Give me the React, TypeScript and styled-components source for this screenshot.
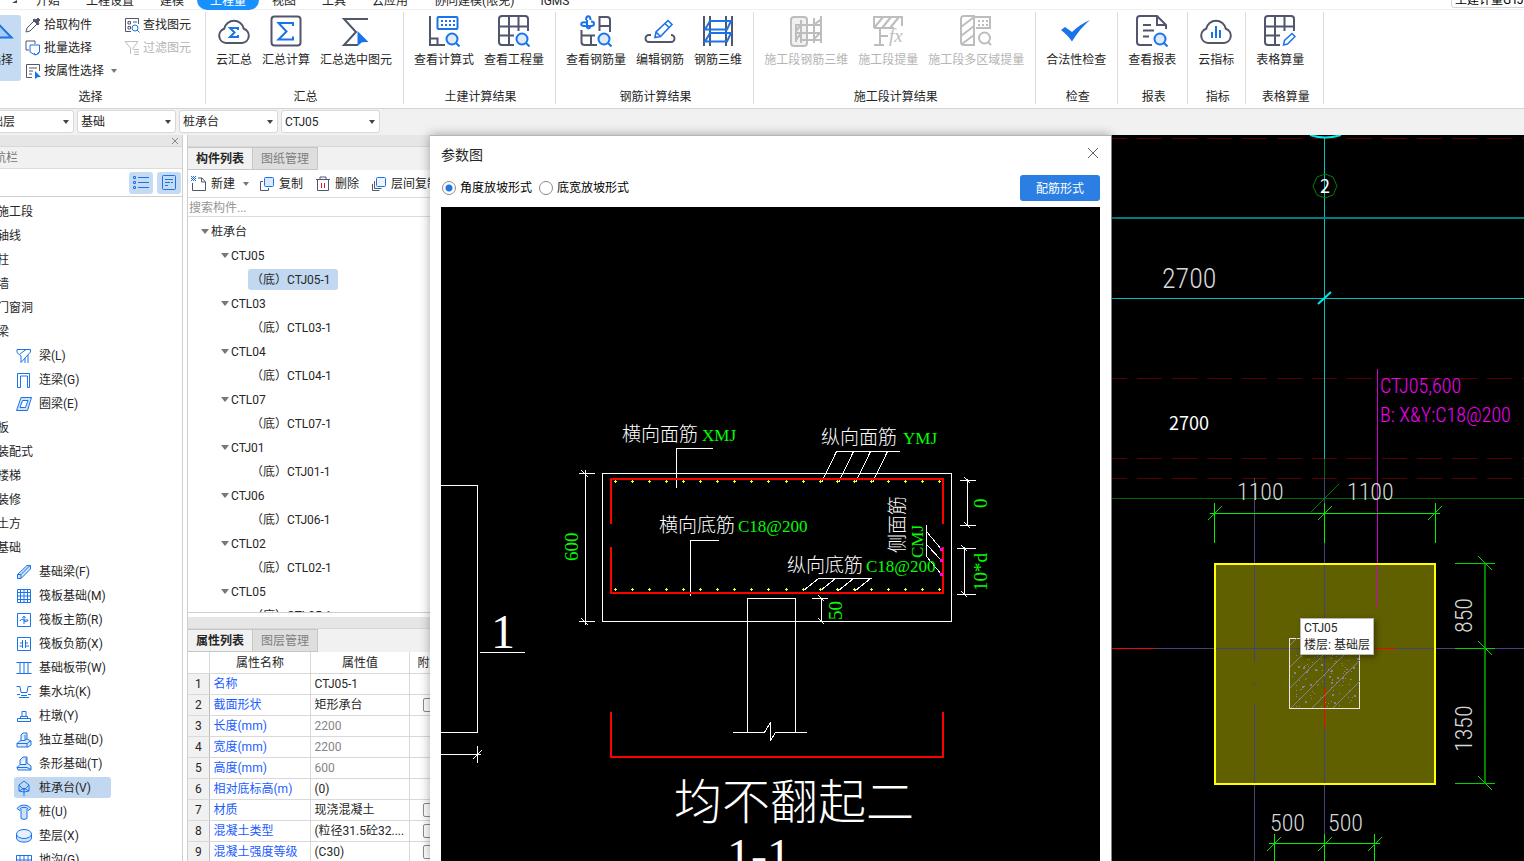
import React, { useState } from "react";
import styled, { createGlobalStyle } from "styled-components";

const INK = "#50566b";
const BLUE = "#1a73e8";
const GREY = "#bdbdbd";
const UI = 'Roboto, "Noto Sans CJK SC", sans-serif';

const GlobalStyle = createGlobalStyle`
  * { box-sizing: border-box; }
  html, body { margin: 0; overflow: hidden; background: #fff; }
  body, button, input, select, table { font-family: ${UI}; font-size: 12px; color: #262626; }
  button { background: none; border: 0; padding: 0; text-align: left; line-height: 16px; }
`;

/* ---------- shell ---------- */
const Shell = styled.div`
  display: flex;
  flex-direction: column;
  height: 100vh;
  margin-left: -26px;
  overflow: hidden;
  line-height: 16px;
`;

const TabBar = styled.nav`
  display: flex;
  align-items: flex-end;
  flex: none;
  height: 10px;
  padding-left: 38px;
  overflow: hidden;
  box-shadow: inset 0 -1px #f0f0f0;
`;
const Corner = styled.svg`
  flex: none;
  width: 6px;
  height: 10px;
  margin-right: 5px;
`;
const MenuTab = styled.button<{ $active?: boolean }>`
  flex: none;
  height: 20px;
  padding: 0 13px;
  border-radius: 10px;
  white-space: nowrap;
  line-height: 22px;
  background: ${(p) => (p.$active ? "#1890ff" : "transparent")};
  color: ${(p) => (p.$active ? "#fff" : "#262626")};
`;
const ProductBox = styled.input`
  width: 90px;
  height: 20px;
  margin: 0 -17px 2px auto;
  padding: 0 3px;
  border: 1px solid #d6d6d6;
  border-radius: 3px;
  color: #000;
`;

/* ---------- ribbon ---------- */
const Ribbon = styled.header`
  display: flex;
  flex: none;
  height: 99px;
  padding-top: 2px;
  border-bottom: 1px solid #d4d4d4;
  background: #fff;
`;
const Group = styled.section<{ $min?: number }>`
  display: flex;
  flex-direction: column;
  flex: none;
  justify-content: space-between;
  height: 92px;
  min-width: ${(p) => p.$min ?? 0}px;
  border-right: 1px solid #dcdcdc;
`;
const GroupButtons = styled.div`
  display: flex;
  gap: 10px;
  padding: 3px 11px 0 10px;
`;
const GroupLabel = styled.div`
  height: 15px;
  padding-left: 2px;
  text-align: center;
`;
const BigButton = styled.button<{ $off?: boolean }>`
  display: flex;
  flex-direction: column;
  flex: none;
  align-items: center;
  gap: 5px;
  white-space: nowrap;
  color: ${(p) => (p.$off ? "#b5b5b5" : "#262626")};
`;
const SelectGroup = styled(Group)`
  width: 232px;
`;
const SelectRow = styled.div`
  display: flex;
  padding-top: 3px;
`;
const PickButton = styled(BigButton)`
  width: 47px;
  height: 66px;
  padding-left: 7px;
  border-radius: 0 3px 3px 0;
  background: #c5dbf3;
`;
const SmallColumn = styled.div`
  display: flex;
  flex-direction: column;
  flex: none;
  width: 99px;
  padding-left: 4px;
`;
const SmallButton = styled.button<{ $off?: boolean }>`
  display: flex;
  align-items: center;
  gap: 3px;
  height: 23px;
  padding-bottom: 4px;
  white-space: nowrap;
  color: ${(p) => (p.$off ? "#b5b5b5" : "#262626")};
`;
const Caret = styled.span`
  width: 0;
  height: 0;
  margin: 0 -2px 0 4px;
  border: 3px solid transparent;
  border-top: 4px solid #777;
  border-bottom: 0;
`;

/* ---------- selector bar ---------- */
const SelectorBar = styled.div`
  display: flex;
  flex: none;
  gap: 3px;
  height: 26px;
  padding: 1px;
  background: #f1f1f1;
`;
const Picker = styled.label`
  position: relative;
  width: 99px;
  height: 23px;
`;
const PickerSelect = styled.select`
  appearance: none;
  width: 100%;
  height: 100%;
  padding: 0 3px;
  border: 1px solid #d8d8d8;
  border-radius: 3px;
  background: #fff;
`;
const PickerCaret = styled(Caret)`
  position: absolute;
  right: 7px;
  top: 10px;
  border-top-color: #444;
`;

/* ---------- work area ---------- */
const WorkArea = styled.main`
  display: flex;
  flex: 1;
  min-height: 0;
  background: #fff;
`;
const NavPanel = styled.aside`
  display: flex;
  flex-direction: column;
  flex: none;
  width: 209px;
  margin-right: 4px;
  border-right: 1px solid #cfcfcf;
  overflow: hidden;
`;
const Strip = styled.div`
  display: flex;
  flex: none;
  justify-content: flex-end;
  align-items: center;
  height: 12px;
  padding-right: 3px;
  background: #e6e6e6;
  border-bottom: 1px solid #d8d8d8;
`;
const NavTitle = styled.div`
  flex: none;
  height: 22px;
  padding: 3px 8px;
  background: #f1f1f1;
  border-bottom: 1px solid #dcdcdc;
  color: #777;
`;
const NavTools = styled.div`
  display: flex;
  flex: none;
  justify-content: flex-end;
  gap: 4px;
  height: 28px;
  padding: 3px 1px 0 0;
  border-bottom: 1px solid #cfcfcf;
`;
const ToggleButton = styled.button`
  display: flex;
  align-items: center;
  justify-content: center;
  width: 24px;
  height: 22px;
  border-radius: 3px;
  background: #c5dbf3;
`;
const NavList = styled.ul`
  flex: 1;
  min-height: 0;
  margin: 0;
  padding: 3px 0 0;
  list-style: none;
  overflow: hidden;
`;
const NavRow = styled.li`
  height: 24px;
  padding: 1px 0 0 23px;
`;
const NavHeading = styled.button`
  display: block;
  height: 22px;
  white-space: nowrap;
`;
const NavItem = styled.button<{ $active?: boolean }>`
  display: flex;
  align-items: center;
  gap: 7px;
  height: 21px;
  margin-left: 17px;
  padding: 0 3px 0 2px;
  min-width: ${(p) => (p.$active ? 97 : 0)}px;
  border-radius: 3px;
  white-space: nowrap;
  background: ${(p) => (p.$active ? "#c2d8f1" : "transparent")};
`;

const ListPanel = styled.aside`
  display: flex;
  flex-direction: column;
  flex: none;
  width: 243px;
  border-left: 1px solid #cfcfcf;
  overflow: hidden;
`;
const PanelTabs = styled.div`
  display: flex;
  flex: none;
  height: 23px;
  background: #f1f1f1;
`;
const PanelTab = styled.button<{ $active?: boolean }>`
  width: 65px;
  border: 1px solid #c6c6c6;
  border-width: 1px 1px 1px 0;
  text-align: center;
  font-weight: ${(p) => (p.$active ? 700 : 400)};
  color: ${(p) => (p.$active ? "#262626" : "#808080")};
  background: ${(p) => (p.$active ? "#f1f1f1" : "#dedede")};
`;
const Toolbar = styled.div`
  display: flex;
  flex: none;
  gap: 12px;
  height: 28px;
  padding: 1px 0 0 3px;
  border-bottom: 1px solid #dcdcdc;
`;
const ToolButton = styled.button`
  display: flex;
  align-items: center;
  gap: 4px;
  flex: none;
  white-space: nowrap;
`;
const SearchInput = styled.input`
  flex: none;
  width: 100%;
  height: 19px;
  padding: 1px 1px 0;
  border: 0;
  border-bottom: 1px solid #dcdcdc;
  outline: 0;
  &::placeholder { color: #969696; }
`;
const Tree = styled.ul`
  flex: 1;
  min-height: 0;
  margin: 0 0 4px;
  padding: 3px 0 0;
  list-style: none;
  overflow: hidden;
  border-bottom: 1px solid #cfcfcf;
`;
const TreeRow = styled.li<{ $depth: number }>`
  display: flex;
  align-items: center;
  height: 24px;
  padding-bottom: 1px;
  padding-left: ${(p) => [9, 29, 60][p.$depth]}px;
`;
const TreeButton = styled.button<{ $active?: boolean }>`
  height: 21px;
  padding: 0 7px 0 3px;
  border-radius: 3px;
  white-space: nowrap;
  background: ${(p) => (p.$active ? "#c2d8f1" : "transparent")};
`;
const TreeCaret = styled(Caret)`
  border-width: 4px;
  border-top-width: 5px;
  border-bottom-width: 0;
  margin-right: -1px;
`;
const Properties = styled.section`
  flex: none;
  height: 244px;
  overflow: hidden;
`;
const PropTable = styled.table`
  table-layout: fixed;
  width: 261px;
  border-collapse: collapse;
  th, td {
    height: 21px;
    padding: 0 3px 0 4px;
    border: 1px solid #d9d9d9;
    border-width: 0 1px 1px 0;
    white-space: nowrap;
    overflow: hidden;
    font-weight: 400;
    line-height: 16px;
    text-align: left;
  }
  thead th, th[scope="row"] { text-align: center; }
  thead th { padding-top: 1px; }
  th[scope="row"] { background: #f1f1f1; padding: 0; border-right-color: #bdbdbd; }
`;
const NameCell = styled.td`
  color: #1a5cff;
`;
const ValueCell = styled.td<{ $dim?: boolean }>`
  color: ${(p) => (p.$dim ? "#858585" : "#262626")};
`;
const TickBox = styled.input`
  appearance: none;
  display: block;
  width: 14px;
  height: 14px;
  margin: 0 auto;
  border: 1px solid #8c8c8c;
  border-radius: 2px;
  background: #fff;
`;

/* ---------- dialog ---------- */
const Dialog = styled.section`
  display: flex;
  flex-direction: column;
  flex: none;
  width: 681px;
  padding: 0 11px;
  border-top: 1px solid #b4b4b4;
  background: #fff;
  box-shadow: 0 0 10px rgba(0, 0, 0, 0.35);
  z-index: 1;
`;
const DialogHead = styled.div`
  display: flex;
  align-items: center;
  justify-content: space-between;
  height: 38px;
`;
const DialogTitle = styled.h2`
  margin: 0;
  font-size: 14px;
  font-weight: 400;
`;
const DialogOptions = styled.div`
  display: flex;
  align-items: flex-start;
  gap: 6px;
  height: 33px;
  padding-top: 1px;
`;
const RadioLabel = styled.label`
  display: flex;
  align-items: center;
  gap: 4px;
  height: 25px;
  color: #000;
`;
const Radio = styled.input`
  appearance: none;
  width: 14px;
  height: 14px;
  margin: 0 0 0 1px;
  border: 1px solid #8a8a8a;
  border-radius: 50%;
  background: #fff;
  &:checked { background: radial-gradient(#1f78e0 3px, #fff 4px); }
`;
const PrimaryButton = styled.button`
  width: 80px;
  height: 26px;
  margin-left: auto;
  padding-top: 1px;
  border-radius: 3px;
  background: #2b7fe3;
  color: #fff;
  text-align: center;
`;
const Drawing = styled.svg`
  display: block;
  flex: 1;
  width: 100%;
  min-height: 0;
  background: #000;
`;
const ModelView = styled.section`
  position: relative;
  display: flex;
  flex: 1;
  min-width: 0;
  border-left: 1px solid #9a9a9a;
  background: #000;
`;
const Tooltip = styled.div`
  position: absolute;
  left: 188px;
  top: 483px;
  padding: 1px 3px 0;
  border: 1px solid #b8b8b8;
  background: #fff;
  line-height: 17px;
  white-space: nowrap;
  box-shadow: 2px 2px 6px rgba(0, 0, 0, 0.4);
`;

/* ---------- ribbon icons ---------- */
const Big = ({ children, color = INK }: { children: React.ReactNode; color?: string }) => (
  <svg width="32" height="32" viewBox="0 0 32 32" fill="none" stroke={color} strokeWidth="2">{children}</svg>
);
const Lens = () => (
  <g stroke={BLUE}>
    <circle cx="24" cy="24" r="5.5" fill="#dfebfb" />
    <path d="M28 28l3.5 3.5" />
  </g>
);
const GridShape = () => (
  <path d="M16 30H4a3 3 0 0 1-3-3V4a3 3 0 0 1 3-3h23a3 3 0 0 1 3 3v12M1 11.5h29M11 1v29M20.5 1v15M1 20.5h15" />
);
const Cloud = () => <path d="M8 28a7.3 7.3 0 0 1-1.8-14.2a10 10 0 0 1 19.6 0a7.3 7.3 0 0 1-1.8 14.2z" />;

const big: Record<string, React.ReactNode> = {
  cloudSum: <Big><Cloud /><path stroke={BLUE} d="M20 15v-2h-8l4.5 4.500L12 22h8v-2" /></Big>,
  sum: <Big><rect x="1.5" y="1.5" width="29" height="29" rx="3" /><path stroke={BLUE} d="M23 11V8H8.500l8 8.500-8 8H23v-3" /></Big>,
  sumPick: <Big><path d="M28 4H4l12 13L4 30h14" /><path fill={BLUE} stroke="none" d="M17.500 16l11 11-6.500.3-4.500 3.700z" /></Big>,
  formula: (
    <Big>
      <path d="M2 1v29h15M2 23.500h7.500V30" />
      <rect x="9.5" y="2" width="20" height="12" rx="1" stroke={BLUE} />
      <path stroke={BLUE} strokeDasharray="2 2" d="M13 6h14M13 10h14" /><Lens />
    </Big>
  ),
  quantity: <Big><GridShape /><Lens /></Big>,
  rebarQty: (
    <Big>
      <path d="M19.500 16V2H27a3 3 0 0 1 3 3v12M19.500 11H30M1.500 15v12a3 3 0 0 0 3 3H17M1.500 20.500H15M11 20.500V30" />
      <g stroke={BLUE}><path d="M6 5c0-5 4.500-5 4.500 0M7 5v8M6 7.500C0 6.500 0 11 4 11h7c4 0 4-4.500 0-4.500M7 12c.5 2 3.500 2 3.500-1.500" /></g>
      <Lens />
    </Big>
  ),
  rebarEdit: (
    <Big>
      <path d="M7 20H5a3.500 3.500 0 0 0 0 7h22a3.500 3.500 0 0 0 0-7" />
      <path stroke={BLUE} strokeWidth="1.6" d="M11 22.500l1-5.500L24 5.500l4 4L16.500 21.500zM21 8.500l4 4M12 17l4.500 4.500" />
    </Big>
  ),
  rebar3d: (
    <Big>
      <path d="M2 1v30M8 1v30M24 1v30M30 1v30" />
      <path stroke={BLUE} d="M8 6h21l-4 8.500H3zM8 18h21l-4 8.500H3z" />
    </Big>
  ),
  segRebar: (
    <Big color={GREY}>
      <rect x="1" y="2" width="16" height="29" rx="3" fill="#f1f1f1" />
      <path d="M6 9v18M11 5v23M24 3v25M31 1v27M6 10h25M6 18h25M11 25h20M6 16l5-6M24 10l6-5M6 25l5-7M24 24l6-6" />
    </Big>
  ),
  segTake: (
    <Big color={GREY}>
      <path d="M2 13V2h28v9M2 13h20M2 13L11 2M10 13l9-11M18 13l9-11M8 14v15M2 30h10M8 21h8" />
      <text x="17" y="27" fontFamily="Liberation Serif, serif" fontStyle="italic" fontSize="19" fill={GREY} stroke="none">fx</text>
    </Big>
  ),
  segArea: (
    <Big color={GREY}>
      <path d="M15 30H4a3 3 0 0 1-3-3V4a3 3 0 0 1 3-3h10v29M1 12L14 2M1 21l13-10M2 29l12-9M14 2h16v11H16" />
      <path strokeDasharray="2 2" d="M18 6h10M18 10h10" />
      <circle cx="24.5" cy="23" r="5.5" /><path d="M28 27l3 3" />
    </Big>
  ),
  check: <Big><path fill={BLUE} stroke="none" d="M1 15l4-3 7 5C17 12 23 8 30 5c-7 6-13 13-18 21.500C9 22 5 18 1 15z" /></Big>,
  report: (
    <Big>
      <path d="M16 30H4a3 3 0 0 1-3-3V4a3 3 0 0 1 3-3h17l9 9v4M21 2v8h8M7 10h8M7 15.500h11M7 21.500h6" /><Lens />
    </Big>
  ),
  cloudIndex: <Big><Cloud /><path stroke={BLUE} d="M12 17v6M16 11v12M20 15v8" /></Big>,
  tableCalc: <Big><GridShape /><path stroke={BLUE} strokeWidth="1.5" fill="#fff" d="M19.500 30l1-4.500 7.500-7 3 3-7.500 7.500z" /></Big>,
};

const Small = ({ children, color = BLUE }: { children: React.ReactNode; color?: string }) => (
  <svg width="16" height="16" viewBox="0 0 16 16" fill="none" stroke={color}>{children}</svg>
);

/* ---------- data ---------- */
const groups: { label: string; min?: number; off?: boolean; items: [string, string][] }[] = [
  { label: "汇总", items: [["cloudSum", "云汇总"], ["sum", "汇总计算"], ["sumPick", "汇总选中图元"]] },
  { label: "土建计算结果", items: [["formula", "查看计算式"], ["quantity", "查看工程量"]] },
  { label: "钢筋计算结果", items: [["rebarQty", "查看钢筋量"], ["rebarEdit", "编辑钢筋"], ["rebar3d", "钢筋三维"]] },
  { label: "施工段计算结果", off: true, items: [["segRebar", "施工段钢筋三维"], ["segTake", "施工段提量"], ["segArea", "施工段多区域提量"]] },
  { label: "检查", items: [["check", "合法性检查"]] },
  { label: "报表", items: [["report", "查看报表"]] },
  { label: "指标", items: [["cloudIndex", "云指标"]] },
  { label: "表格算量", min: 78, items: [["tableCalc", "表格算量"]] },
];

const menu = ["开始", "工程设置", "建模", "工程量", "视图", "工具", "云应用", "协同建模(限免)", "IGMS"];

const navData: [string, React.ReactNode?][] = [
  ["施工段"], ["轴线"], ["柱"], ["墙"], ["门窗洞"], ["梁"],
  ["梁(L)", <path d="M1 1.500h13.500V4L5 14.500V8L1 4.500zM4 6l6-4.500M9 10v5M12 7v8" />],
  ["连梁(G)", <path d="M1.500 15.500v-14h12v14h-2V4h-7v11.500z" />],
  ["圈梁(E)", <path fill="#cfe2fb" d="M5 1.500h10.500l-4 13H.5zM6.500 4.500L4 11.500h5.500l2.500-7z" />],
  ["板"], ["装配式"], ["楼梯"], ["装修"], ["土方"], ["基础"],
  ["基础梁(F)", <path fill="#cfe2fb" d="M1.500 10.500L11 1.500h3.500V5L5 14.500H1.500zM1.500 10.500H5v4M5 10.500l9-9" />],
  ["筏板基础(M)", <path d="M1.500 1.500h13v13h-13zM4.500 1v14M8 1v14M11.500 1v14M1 4.500h14M1 8h14M1 11.500h14" />],
  ["筏板主筋(R)", <path d="M1.500 1.500h13v13h-13zM8 4v8M4 9c0-2 3-1.500 4-1h4M6.500 6c0-2 3-2 3 0M12 8c0 2-3 2-4 1" />],
  ["筏板负筋(X)", <path d="M1.500 1.500h13v13h-13zM6.500 4v8M9.500 4v8M4 7h3M9 7h3M3.500 10H7M9 10h4" />],
  ["基础板带(W)", <path d="M.5 2.500h15M.5 13.500h15M4 3v10M8 3v10M12 3v10" />],
  ["集水坑(K)", <path d="M.5 2.500H4l1 6h6l1-6h3.500M1 10.500h3M12 10.500h3M3 13.500h10M5 11.500h6" />],
  ["柱墩(Y)", <path d="M1.500 10.500h13v3h-13zM4.500 10.500v-2h7v2M6 8.500v-5h4v5" />],
  ["独立基础(D)", <path fill="#dbe9fc" d="M1 11.500l2-2 2-1V3l2-2h4v6l4 2v4l-3 2H1zM1 11.500h10v3.500M11 11.500l4-3M5 8.500h4V3M9 8l2-1" />],
  ["条形基础(T)", <path fill="#dbe9fc" d="M1 11.500l3-3V4l3-3h4v6l4 3v4H2zM1 11.500h10l4 2M4 8.500h6V2" />],
  ["桩承台(V)", <path d="M8 1l5 4v6l-5-3-5 3V5zM3 5l5 5 5-5M3 11l5 1 5-1M8 9v7" />],
  ["桩(U)", <path fill="#cfe2fb" d="M1 4.500C4 0 12 0 15 4.500l-3 2-1-1v9l-3 1-3-1v-9l-1 1zM4 4.500c2-1.500 6-1.500 8 0" />],
  ["垫层(X)", <g><path fill="#cfe2fb" d="M.5 6v4c0 5.500 15 5.500 15 0V6" /><ellipse cx="8" cy="6" rx="7.5" ry="4.5" fill="#e6f0fd" /></g>],
  ["地沟(G)", <path d="M.5 3.500h15v9H.5zM.5 8h15M4 3v9M8 3v9M12 3v9" />],
];

const treeData: [number, string][] = [
  [0, "桩承台"], [1, "CTJ05"], [2, "CTJ05-1"], [1, "CTL03"], [2, "CTL03-1"], [1, "CTL04"], [2, "CTL04-1"],
  [1, "CTL07"], [2, "CTL07-1"], [1, "CTJ01"], [2, "CTJ01-1"], [1, "CTJ06"], [2, "CTJ06-1"],
  [1, "CTL02"], [2, "CTL02-1"], [1, "CTL05"], [2, "CTL05-1"],
];

const props: { name: string; value: string; dim?: boolean; tick?: boolean }[] = [
  { name: "名称", value: "CTJ05-1" },
  { name: "截面形状", value: "矩形承台", tick: true },
  { name: "长度(mm)", value: "2200", dim: true },
  { name: "宽度(mm)", value: "2200", dim: true },
  { name: "高度(mm)", value: "600", dim: true },
  { name: "相对底标高(m)", value: "(0)" },
  { name: "材质", value: "现浇混凝土", tick: true },
  { name: "混凝土类型", value: "(粒径31.5砼32....", tick: true },
  { name: "混凝土强度等级", value: "(C30)", tick: true },
];

/* ---------- section drawing in the dialog ---------- */
const barXs = Array.from({ length: 20 }, (_, i) => 615 + Math.round(i * 17.05));
const Cad = styled.text<{ $s?: number }>`
  font-family: "Liberation Serif", serif;
  font-size: ${(p) => p.$s ?? 17}px;
  fill: #00ff00;
  stroke: none;
`;
const CadWhite = styled(Cad)`
  fill: #fff;
`;
const CadZh = styled(CadWhite)`
  font-family: "Noto Sans CJK SC", sans-serif;
  font-weight: 300;
`;

const SectionDrawing = () => (
  <Drawing viewBox="441 207 659 654" preserveAspectRatio="xMinYMin slice" fill="none" stroke="#fff" shapeRendering="crispEdges">
    {/* hairlines sit on pixel centres */}
    <g transform="translate(-.5 -.5)">
      <path d="M441 486H478V733H441M441 755H481M478 746V763M473 760L482 751M480 653H525" />
      <rect x="603" y="474" width="349" height="148" />
      <path d="M713 449H677V488M719 541H691V596" />
      <path d="M900 452H837L822 483M854 452L839 483M871 452L856 483M888 452L873 483" />
      <path d="M872 579H819L804 591M836 579L821 591M854 579L839 591M871 579L856 591" />
      <path d="M927 525V557L942 575M927 532L942 550M927 545L942 561" />
      <path d="M586 470V625M579 474H595M579 622H595M582 471L589 478M582 619L589 626" />
      <path d="M968 479V526M960 481H976M960 526H976M965 478L971 484M965 523L971 529" />
      <path d="M965 547V595M957 549H976M957 595H976M962 546L968 552M962 592L968 598" />
      <path d="M822 598V622M812 599H828M819 596L825 602M819 619L825 625" />
      <path d="M748 733V599H796V733M733 733H765L771 723V741L776 733H807" />
    </g>
    <path stroke="#f00" strokeWidth="2" d="M611 524V479H943V524M611 547V593H943V547M611 712V757H943V712" />
    <g fill="#ff0" stroke="none">
      {barXs.flatMap((x) => [481, 589].map((y) => (
        <path key={`${x}-${y}`} d={`M${x - 1} ${y}h3v1h-3zM${x} ${y - 1}h1v3h-1z`} />
      )))}
    </g>
    <path fill="#f0f" stroke="none" d="M940 548h3v3h-3zM940 559h3v3h-3zM940 573h3v3h-3z" />
    <CadZh $s={19} x="622" y="441">横向面筋</CadZh>
    <Cad x="702" y="441">XMJ</Cad>
    <CadZh $s={19} x="821" y="444">纵向面筋</CadZh>
    <Cad x="903" y="444">YMJ</Cad>
    <CadZh $s={19} x="659" y="532">横向底筋</CadZh>
    <Cad x="738" y="532">C18@200</Cad>
    <CadZh $s={19} x="787" y="572">纵向底筋</CadZh>
    <Cad x="866" y="572">C18@200</Cad>
    <CadZh $s={19} transform="translate(904 553) rotate(-90)">侧面筋</CadZh>
    <Cad transform="translate(923 558) rotate(-90)">CMJ</Cad>
    <Cad $s={19} transform="translate(578 561) rotate(-90)">600</Cad>
    <Cad $s={19} transform="translate(987 508) rotate(-90)">0</Cad>
    <Cad $s={19} transform="translate(987 591) rotate(-90)">10*d</Cad>
    <Cad $s={19} transform="translate(842 620) rotate(-90)">50</Cad>
    <CadWhite $s={48} x="491" y="648">1</CadWhite>
    <CadZh $s={48} x="674" y="819">均不翻起二</CadZh>
    <CadWhite $s={48} x="727" y="872">1-1</CadWhite>
  </Drawing>
);

/* ---------- plan view ---------- */
const PlanText = styled.text<{ $s?: number }>`
  font-family: "Roboto Condensed", "Liberation Sans Narrow", Roboto, sans-serif;
  font-weight: 300;
  font-size: ${(p) => p.$s ?? 24}px;
  fill: #d8d8d8;
  stroke: none;
`;
const MarkText = styled(PlanText)`
  fill: #f400f4;
`;
const AxisText = styled.text`
  font-family: "Noto Sans CJK SC", sans-serif;
  font-size: 18px;
  fill: #fff;
  stroke: none;
`;
/* aggregate dots of the concrete hatch, scattered by a fixed-seed generator */
const specks = (() => {
  let seed = 7;
  const next = (n: number) => {
    seed = (seed * 1103515245 + 12345) % 2147483648;
    return Math.floor((seed / 2147483648) * n);
  };
  return Array.from({ length: 110 }, () => [1292 + next(66), 655 + next(52)]);
})();
const slash = (x: number, y: number) => `M${x - 7} ${y + 7}L${x + 7} ${y - 7}`;
const backslash = (x: number, y: number) => `M${x - 7} ${y - 7}L${x + 7} ${y + 7}`;

const PlanDrawing = () => (
  <Drawing viewBox="1112 135 412 726" preserveAspectRatio="xMinYMin slice" fill="none">
    <rect x="1215" y="564" width="220" height="220" fill="#606000" />
    {/* hairlines sit on pixel centres */}
    <g shapeRendering="crispEdges" transform="translate(-.5 -.5)">
      <path stroke="#580000" strokeDasharray="25 10" d="M1102 139H1600M1102 379H1600M1102 459H1600M1102 479H1600" />
      <path stroke="#00c4c4" d="M1112 299H1600M1325 138V459" />
      <path stroke="#006c00" d="M1325 459V503M1112 499H1600" />
      <path stroke="#46427c" d="M1255 478V662M1255 682V685M1255 704V861M1325 478V862M1112 649H1600" />
      <path stroke="#f00" d="M1112 649H1132M1134 649H1154M1375 649H1396M1325 688V728" />
      <path stroke="#d000d0" d="M1378 369V607" />
      <path stroke="#00f000" d="M1210 514H1440M1215 503V543M1325 503V543M1436 503V543M1269 844H1380M1275 834V862M1325 834V862M1375 834V862" />
      <path stroke="#00d000" d="M1455 564H1495M1455 649H1495M1455 784H1495" />
      <rect x="1290" y="639" width="70" height="70" stroke="#e8e8e8" />
    </g>
    <g shapeRendering="crispEdges">
      <path stroke="#008080" strokeWidth="2" d="M1112 218H1600" />
      <rect x="1215" y="564" width="220" height="220" stroke="#ff0" strokeWidth="2" />
      <path stroke="#008400" strokeWidth="2" d="M1485 564V784" />
      {specks.map(([x, y], i) => (
        <rect key={i} x={x} y={y} width={i % 6 ? 1 : 2} height={i % 6 ? 1 : 2} fill="#85819a" />
      ))}
    </g>
    <path stroke="#85819a" d="M1290 645L1297 638M1290 667L1319 638M1290 688L1340 638M1291 708L1360 639M1312 708L1360 660M1333 708L1360 681" />
    <path stroke="#00e8e8" strokeWidth="2" d="M1310 135Q1325 140 1341 135M1318 304L1331 292" />
    <path stroke="#007c00" d="M1325 174l8 3 4 9-4 9-8 3-8-3-4-9 4-9zM1311 512L1339 484" />
    <path stroke="#00dc00" d={[slash(1215, 513), slash(1325, 513), slash(1435, 513), slash(1274, 844), slash(1325, 844), slash(1375, 844), backslash(1485, 563), backslash(1485, 648), backslash(1485, 783)].join("")} />
    <AxisText x="1325" y="193" textAnchor="middle">2</AxisText>
    <AxisText x="1169" y="430">2700</AxisText>
    <PlanText $s={28} x="1162" y="288">2700</PlanText>
    <PlanText x="1237" y="500">1100</PlanText>
    <PlanText x="1347" y="500">1100</PlanText>
    <PlanText x="1270" y="831">500</PlanText>
    <PlanText x="1328" y="831">500</PlanText>
    <PlanText transform="translate(1472 633) rotate(-90)">850</PlanText>
    <PlanText transform="translate(1472 752) rotate(-90)">1350</PlanText>
    <MarkText $s={20} x="1380" y="393">CTJ05,600</MarkText>
    <MarkText $s={20} x="1380" y="422">B: X&amp;Y:C18@200</MarkText>
  </Drawing>
);

export default function App() {
  const [form, setForm] = useState("angle");
  return (
    <>
      <GlobalStyle />
      <Shell lang="zh-CN">
        <TabBar>
          <Corner viewBox="0 0 6 10"><path d="M5 0v3H0z" fill="#444" /></Corner>
          {menu.map((m) => <MenuTab key={m} $active={m === "工程量"}>{m}</MenuTab>)}
          <ProductBox aria-label="产品" defaultValue="土建计量GTJ" />
        </TabBar>

        <Ribbon>
          <SelectGroup>
            <SelectRow>
              <PickButton>
                <svg width="32" height="32" viewBox="0 0 32 32"><path d="M8 3.500v26l7-7h11.500z" fill="#a9cbf5" stroke={BLUE} strokeWidth="2" /></svg>
                选择
              </PickButton>
              <SmallColumn>
                <SmallButton>
                  <Small color={INK}><path d="M1 15l1-4 7-7M1 15l4-1 7-7" /><path fill={INK} d="M8 3l5 5 1-1-1-2 2-2-2-2-2 2-2-1z" /></Small>拾取构件
                </SmallButton>
                <SmallButton>
                  <Small color={INK}><path d="M4 10H1V1h9v3" /><path stroke={BLUE} fill="#fff" d="M5 5h9.500v7L13 14l-3 1-5-3zM9 13l2 2 4-4" /></Small>批量选择
                </SmallButton>
                <SmallButton>
                  <Small color={INK}><path d="M7 14.500H1.500v-13h13V8M4 5h8M4 8h4M4 11h3" /><path fill={BLUE} stroke="none" d="M10 8l6 6-3.500.2L10 16z" /></Small>按属性选择<Caret />
                </SmallButton>
              </SmallColumn>
              <SmallColumn>
                <SmallButton>
                  <Small color={INK}><path d="M7 14.500H1.500v-13h13V7M4 4.500h2.500V7H4zM4 9.500h2.500V12H4zM9 5h4" /><circle cx="11" cy="11" r="3" stroke={BLUE} /><path stroke={BLUE} d="M13 13l2.500 2.500" /></Small>查找图元
                </SmallButton>
                <SmallButton $off disabled>
                  <Small color={GREY}><path d="M1 1.500h13L9 8v2M1 1.500L6.500 8v6M10 9.500h5M10 12h5M10 14.500h5" /></Small>过滤图元
                </SmallButton>
              </SmallColumn>
            </SelectRow>
            <GroupLabel>选择</GroupLabel>
          </SelectGroup>
          {groups.map((g) => (
            <Group key={g.label} $min={g.min}>
              <GroupButtons>
                {g.items.map(([icon, text]) => (
                  <BigButton key={text} $off={g.off} disabled={g.off}>{big[icon]}{text}</BigButton>
                ))}
              </GroupButtons>
              <GroupLabel>{g.label}</GroupLabel>
            </Group>
          ))}
        </Ribbon>

        <SelectorBar>
          {[["楼层", "基础层"], ["类别", "基础"], ["类型", "桩承台"], ["构件", "CTJ05"]].map(([label, v]) => (
            <Picker key={label}>
              <PickerSelect aria-label={label} defaultValue={v}><option>{v}</option></PickerSelect>
              <PickerCaret />
            </Picker>
          ))}
        </SelectorBar>

        <WorkArea>
          <NavPanel>
            <Strip><svg width="8" height="8" viewBox="0 0 8 8" stroke="#888"><path d="M1 1l6 6M7 1L1 7" /></svg></Strip>
            <NavTitle>导航栏</NavTitle>
            <NavTools>
              <ToggleButton aria-label="列表"><Small><path d="M.5 1.500h2v2h-2zM.5 6.500h2v2h-2zM.5 11.500h2v2h-2zM5 2.500h11M5 7.500h11M5 12.500h11" /></Small></ToggleButton>
              <ToggleButton aria-label="详情"><Small><rect x="1.5" y=".5" width="13" height="14" rx="1" /><path d="M4 4.500h8M4 7.500h5M4 10.500h3M10 7.500h2" /></Small></ToggleButton>
            </NavTools>
            <NavList>
              {navData.map(([text, icon], i) => (
                <NavRow key={i}>
                  {icon
                    ? <NavItem $active={text === "桩承台(V)"}><Small>{icon}</Small>{text}</NavItem>
                    : <NavHeading>{text}</NavHeading>}
                </NavRow>
              ))}
            </NavList>
          </NavPanel>

          <ListPanel>
            <Strip />
            <PanelTabs><PanelTab $active>构件列表</PanelTab><PanelTab>图纸管理</PanelTab></PanelTabs>
            <Toolbar>
              <ToolButton>
                <Small color={INK}><path d="M1.500 7v7.500h13V6L11 2H7M10.500 2v4h4" /><path fill={BLUE} stroke="none" d="M0 0h1v1H0zM2 0h1v1H2zM4 0h1v1H4zM1 1h1v1H1zM3 1h1v1H3zM0 2h1v1H0zM2 2h1v1H2zM4 2h1v1H4zM1 3h1v1H1zM3 3h1v1H3zM0 4h1v1H0zM2 4h1v1H2zM4 4h1v1H4z" /></Small>新建<Caret />
              </ToolButton>
              <ToolButton>
                <Small color={INK}><path d="M4 5.500H1.500v9h8V12" /><rect x="5.5" y="1.5" width="9" height="9" rx="1" fill="#dbe9fc" stroke={BLUE} /></Small>复制
              </ToolButton>
              <ToolButton>
                <Small color={INK}><path d="M1 3.500h14M5 4V1h6v3M2.500 4v10.500h11V4" /><path stroke="#e02020" d="M6.500 7v5M9.500 7v5" /></Small>删除
              </ToolButton>
              <ToolButton>
                <Small color={INK}><path d="M1.500 8v6.500h7M3.500 5v7.500h7" /><rect x="5.5" y="1.5" width="9" height="9" rx="1" fill="#eef4fe" stroke={BLUE} /></Small>层间复制
              </ToolButton>
            </Toolbar>
            <SearchInput aria-label="搜索构件" placeholder="搜索构件..." />
            <Tree>
              {treeData.map(([depth, name], i) => (
                <TreeRow key={i} $depth={depth}>
                  {depth < 2 && <TreeCaret />}
                  <TreeButton $active={i === 2}>{depth === 2 ? `（底）${name}` : name}</TreeButton>
                </TreeRow>
              ))}
            </Tree>
            <Properties>
              <Strip />
              <PanelTabs><PanelTab $active>属性列表</PanelTab><PanelTab>图层管理</PanelTab></PanelTabs>
              <PropTable>
                <colgroup><col width="21" /><col width="101" /><col width="99" /><col width="40" /></colgroup>
                <thead><tr><th /><th>属性名称</th><th>属性值</th><th>附加</th></tr></thead>
                <tbody>
                  {props.map((p, i) => (
                    <tr key={p.name}>
                      <th scope="row">{i + 1}</th>
                      <NameCell>{p.name}</NameCell>
                      <ValueCell $dim={p.dim}>{p.value}</ValueCell>
                      <td>{p.tick && <TickBox type="checkbox" aria-label={`附加${p.name}`} />}</td>
                    </tr>
                  ))}
                </tbody>
              </PropTable>
            </Properties>
          </ListPanel>

          <Dialog role="dialog" aria-label="参数图">
            <DialogHead>
              <DialogTitle>参数图</DialogTitle>
              <button aria-label="关闭"><svg width="14" height="14" viewBox="0 0 14 14" stroke="#666"><path d="M2 2l10 10M12 2L2 12" /></svg></button>
            </DialogHead>
            <DialogOptions>
              <RadioLabel><Radio type="radio" name="form" checked={form === "angle"} onChange={() => setForm("angle")} />角度放坡形式</RadioLabel>
              <RadioLabel><Radio type="radio" name="form" checked={form === "width"} onChange={() => setForm("width")} />底宽放坡形式</RadioLabel>
              <PrimaryButton>配筋形式</PrimaryButton>
            </DialogOptions>
            <SectionDrawing />
          </Dialog>

          <ModelView>
            <PlanDrawing />
            <Tooltip role="tooltip">CTJ05<br />楼层: 基础层</Tooltip>
          </ModelView>
        </WorkArea>
      </Shell>
    </>
  );
}
